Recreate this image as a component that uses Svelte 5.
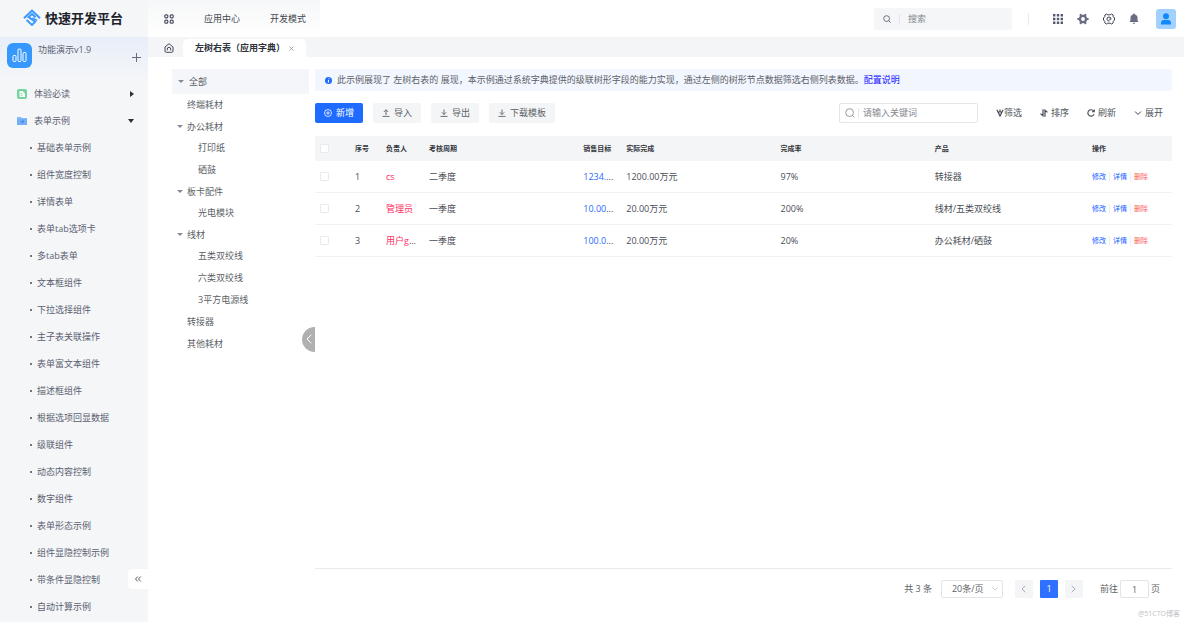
<script>
  const menu = [
    '基础表单示例', '组件宽度控制', '详情表单', '表单tab选项卡', '多tab表单', '文本框组件',
    '下拉选择组件', '主子表关联操作', '表单富文本组件', '描述框组件', '根据选项回显数据',
    '级联组件', '动态内容控制', '数字组件', '表单形态示例', '组件显隐控制示例',
    '带条件显隐控制', '自动计算示例',
  ];
  const tree = [
    { label: '终端耗材' },
    { label: '办公耗材', children: ['打印纸', '硒鼓'] },
    { label: '板卡配件', children: ['光电模块'] },
    { label: '线材', children: ['五类双绞线', '六类双绞线', '3平方电源线'] },
    { label: '转接器' },
    { label: '其他耗材' },
  ];
  const rows = [
    { owner: 'cs', period: '二季度', goal: '1234.', actual: '1200.00万元', rate: '97%', product: '转接器' },
    { owner: '管理员', period: '一季度', goal: '10.00', actual: '20.00万元', rate: '200%', product: '线材/五类双绞线' },
    { owner: '用户g', more: true, period: '一季度', goal: '100.0', actual: '20.00万元', rate: '20%', product: '办公耗材/硒鼓' },
  ];
  let keyword = $state('');
  let query = $state('');
  let page = $state('1');
</script>

<div class="app">
  <aside class="side">
    <div class="brand">
      <svg width="18" height="18" viewBox="0 0 18 18" fill="none" stroke="#3a97fb" stroke-width="2">
        <path d="M1 9.200 9 1.600l8 7.600" />
        <path d="M12.600 8.200 9 5 5.600 8.100l6.600 4.600L9 15.900l-5.400-5" />
        <path d="m9.400 9 4.800 2.400" stroke-width="1.400" />
      </svg>
      <strong>快速开发平台</strong>
    </div>
    <div class="product">
      <span class="product-icon">
        <svg width="15" height="15" viewBox="0 0 15 15" fill="none" stroke="#fff" stroke-width="1">
          <rect x="1" y="7.500" width="3" height="6" rx="1" />
          <rect x="6" y="1" width="3" height="12.500" rx="1" />
          <rect x="11" y="4.500" width="3" height="9" rx="1" />
        </svg>
      </span>
      <span class="product-name">功能演示v1.9</span>
      <button class="plain add" aria-label="添加">
        <svg width="9" height="9" viewBox="0 0 9 9" stroke="#686b78" stroke-width="1"><path d="M4.500 0v9M0 4.500h9" /></svg>
      </button>
    </div>
    <nav class="menu" aria-label="菜单">
      <button class="plain group">
        <svg width="10" height="10" viewBox="0 0 10 10"><rect width="10" height="10" rx="2" fill="#74d3a1" /><path d="M2.500 2h3L8 4.500V8H2.500z" fill="#fff" /><path d="M3.500 4.500h2M3.500 6.300h2" stroke="#74d3a1" stroke-width=".8" /></svg>
        <span>体验必读</span>
        <i class="caret right"></i>
      </button>
      <button class="plain group">
        <svg width="10" height="10" viewBox="0 0 10 10"><path d="M0 1h4l1 1h5v7H0z" fill="#86bcf9" /><path d="M0 3h10v6H0z" fill="#73aff6" /><path d="m6.500 4-3 1.700 3 1.600z" fill="#3c84e6" /></svg>
        <span>表单示例</span>
        <i class="caret down"></i>
      </button>
      <ul>
        {#each menu as item}
          <li><a href="#item">{item}</a></li>
        {/each}
      </ul>
    </nav>
    <button class="plain fold" aria-label="收起菜单">
      <svg width="8" height="8" viewBox="0 0 8 8" fill="none" stroke="#555a66" stroke-width="1"><path d="M3.800 1.500 1.500 4l2.300 2.500M6.800 1.500 4.500 4l2.300 2.500" /></svg>
    </button>
  </aside>

  <div class="work">
    <header>
      <nav class="top-nav" aria-label="主导航">
        <svg width="10" height="10" viewBox="0 0 10 10" fill="none" stroke="#4b4f60" stroke-width="1.200"><rect x=".8" y=".8" width="3" height="3" rx="1" /><rect x="6.200" y=".8" width="3" height="3" rx="1" /><rect x=".8" y="6.200" width="3" height="3" rx="1" /><rect x="6.200" y="6.200" width="3" height="3" rx="1" /></svg>
        <a href="#apps">应用中心</a>
        <a href="#dev">开发模式</a>
      </nav>
      <label class="global-search">
        <svg width="8" height="8" viewBox="0 0 8 8" fill="none" stroke="#6b6f7e"><circle cx="3.600" cy="3.600" r="2.900" /><path d="m5.800 5.800 1.800 1.800" /></svg>
        <input type="text" placeholder="搜索" aria-label="搜索" bind:value={query} />
      </label>
      <div class="tools">
        <button class="plain" aria-label="应用">
          <svg width="10" height="10" viewBox="0 0 10 10" fill="#555970"><path d="M0 0h2.400v2.400H0zM3.800 0h2.400v2.400H3.800zM7.600 0H10v2.400H7.600zM0 3.800h2.400v2.400H0zM3.800 3.800h2.400v2.400H3.800zM7.600 3.800H10v2.400H7.600zM0 7.600h2.400V10H0zM3.800 7.600h2.400V10H3.800zM7.600 7.600H10V10H7.600z" /></svg>
        </button>
        <button class="plain" aria-label="设置">
          <svg width="12" height="12" viewBox="0 0 12 12" fill="none" stroke="#6a6e84"><circle cx="6" cy="6" r="3.100" stroke-width="2.400" /><path d="M1.800 6h-.6M10.200 6h.6M3.900 2.400l-.3-.5M8.100 2.400l.3-.5M3.900 9.600l-.3.500M8.100 9.600l.3.500" stroke-width="2.200" stroke-linecap="round" /></svg>
        </button>
        <button class="plain" aria-label="主题">
          <svg width="12" height="12" viewBox="0 0 12 12" fill="none" stroke="#3d4053"><path stroke-linejoin="round" d="M3.400 1 4.800 1.800h2.400L8.600 1l1.500 1 .1 1.600L11.500 5v2l-1.300 1.400-.1 1.600-1.500 1-1.400-.8H4.800l-1.400.8-1.500-1-.1-1.600L.500 7V5l1.300-1.400L1.900 2z" /><path d="M6.200 6.200H8A2 2 0 1 0 6.600 7.900" /></svg>
        </button>
        <button class="plain" aria-label="通知">
          <svg width="10" height="12" viewBox="0 0 10 12" fill="#686d82"><path d="M5 .500a1 1 0 0 1 1 .9c1.600.4 2.500 1.600 2.500 3.300v2.600L9.600 9H.4l1.100-1.700V4.700C1.500 3 2.400 1.800 4 1.400A1 1 0 0 1 5 .500zM3.600 9.800h2.800L5 11.200z" /></svg>
        </button>
      </div>
      <button class="plain avatar" aria-label="用户">
        <svg width="12" height="12" viewBox="0 0 12 12" fill="#1188fb"><circle cx="6" cy="3.200" r="3" /><path d="M1 11.500V10q0-3 3-3h4q3 0 3 3v1.500z" /></svg>
      </button>
    </header>

    <div class="tabs">
      <button class="plain home" aria-label="首页">
        <svg width="10" height="10" viewBox="0 0 10 10" fill="none" stroke="#454958"><path d="M1 4 5 .700 9 4v4q0 1.300-1.300 1.300H2.300Q1 9.300 1 8z" /><path d="M3.300 7.400V6a1.700 1.700 0 0 1 3.400 0v1.400" /></svg>
      </button>
      <div class="tab">
        <strong>左树右表（应用字典）</strong>
        <button class="plain" aria-label="关闭">
          <svg width="5" height="5" viewBox="0 0 5 5" stroke="#8a8d98" stroke-width=".8"><path d="m.500.500 4 4M4.500.500l-4 4" /></svg>
        </button>
      </div>
    </div>

    <div class="body">
      <section class="tree">
        <div class="root"><i class="caret down small"></i>全部</div>
        <ul>
          {#each tree as node}
            <li>
              <div class="node" class:open={node.children}>
                {#if node.children}<i class="caret down small"></i>{/if}{node.label}
              </div>
              {#if node.children}
                <ul>
                  {#each node.children as child}
                    <li class="node leaf">{child}</li>
                  {/each}
                </ul>
              {/if}
            </li>
          {/each}
        </ul>
        <button class="plain handle" aria-label="收起左侧">
          <svg width="6" height="10" viewBox="0 0 6 10" fill="none" stroke="#fff" stroke-width="1"><path d="M5.300.800 1 5l4.300 4.200" /></svg>
        </button>
      </section>

      <main>
        <p class="tip">
          <svg width="7" height="7" viewBox="0 0 7 7"><circle cx="3.500" cy="3.500" r="3.500" fill="#1f6bff" /><path d="M3.900 1.300v.900M3.600 2.900 3.300 5.600" stroke="#fff" /></svg>
          <span>此示例展现了 左树右表的 展现，本示例通过系统字典提供的级联树形字段的能力实现，通过左侧的树形节点数据筛选右侧列表数据。<a href="#help">配置说明</a></span>
        </p>

        <div class="toolbar">
          <button class="btn primary">
            <svg width="8" height="8" viewBox="0 0 8 8" fill="none" stroke="#fff" stroke-width=".8"><circle cx="4" cy="4" r="3.500" /><path d="M4 2.200v3.600M2.200 4h3.600" /></svg>新增
          </button>
          <button class="btn">
            <svg width="8" height="8" viewBox="0 0 8 8" fill="none" stroke="#5c5f69" stroke-width=".9"><path d="M4 6V.800M1.800 3 4 .800 6.200 3M.500 7.400h7" /></svg>导入
          </button>
          <button class="btn">
            <svg width="8" height="8" viewBox="0 0 8 8" fill="none" stroke="#5c5f69" stroke-width=".9"><path d="M4 .500v5M1.800 3.300 4 5.500l2.200-2.200M.500 7.400h7" /></svg>导出
          </button>
          <button class="btn">
            <svg width="8" height="8" viewBox="0 0 8 8" fill="none" stroke="#5c5f69" stroke-width=".9"><path d="M4 .500v5M1.800 3.300 4 5.500l2.200-2.200M.500 7.400h7" /></svg>下载模板
          </button>
          <label class="search">
            <svg width="10" height="10" viewBox="0 0 10 10" fill="none" stroke="#8a8d96" stroke-width=".9"><circle cx="4.600" cy="4.600" r="3.900" /><path d="m7.400 7.400 2 2" /></svg>
            <input type="text" placeholder="请输入关键词" aria-label="关键词" bind:value={keyword} />
          </label>
          <div class="actions">
            <button class="plain">
              <svg width="8" height="8" viewBox="0 0 8 8" fill="none" stroke="#454852" stroke-width="1.200"><path d="M.900.700 4 7 7.100.700M2 3h4M4 .500V3" /></svg>筛选
            </button>
            <button class="plain gap">
              <svg width="8" height="8" viewBox="0 0 8 8" fill="none" stroke="#454852" stroke-width="1.200"><path d="M3 .300v6.500L.500 4.600M5 7.700V1.200l2.500 2.200" /></svg>排序
            </button>
            <button class="plain gap">
              <svg width="8" height="8" viewBox="0 0 8 8" fill="none" stroke="#454852" stroke-width="1.100"><path d="M7 5.200A3.200 3.200 0 1 1 6.600 2M7.200.500v2.200H5" /></svg>刷新
            </button>
            <button class="plain gap">
              <svg width="8" height="8" viewBox="0 0 8 8" fill="none" stroke="#454852" stroke-width="1"><path d="m1 2.500 3 3 3-3" /></svg>展开
            </button>
          </div>
        </div>

        <table>
          <colgroup>
            <col class="c-check" /><col class="c-no" /><col class="c-short" /><col class="c-wide" />
            <col class="c-short" /><col class="c-wide" /><col class="c-wide" /><col /><col class="c-ops" />
          </colgroup>
          <thead>
            <tr>
              <th><input type="checkbox" aria-label="全选" /></th>
              <th>序号</th><th>负责人</th><th>考核周期</th><th>销售目标</th><th>实际完成</th><th>完成率</th><th>产品</th><th>操作</th>
            </tr>
          </thead>
          <tbody>
            {#each rows as row, i}
              <tr>
                <td><input type="checkbox" aria-label={`选择 ${i + 1}`} /></td>
                <td>{i + 1}</td>
                <td><span class="owner">{row.owner}</span>{#if row.more}...{/if}</td>
                <td>{row.period}</td>
                <td><span class="goal">{row.goal}</span>...</td>
                <td>{row.actual}</td>
                <td>{row.rate}</td>
                <td>{row.product}</td>
                <td>
                  <div class="ops">
                    <a href="#edit">修改</a>
                    <a href="#detail">详情</a>
                    <a href="#delete" class="danger">删除</a>
                  </div>
                </td>
              </tr>
            {/each}
          </tbody>
        </table>

        <footer>
          <span class="total">共 3 条</span>
          <span class="size">
            <select aria-label="每页条数"><option>20条/页</option></select>
            <svg width="6" height="4" viewBox="0 0 6 4" fill="none" stroke="#c0c4cc" stroke-width=".9"><path d="m.500.500 2.500 2.600L5.500.500" /></svg>
          </span>
          <div class="pager">
            <button class="plain" aria-label="上一页"><svg width="5" height="8" viewBox="0 0 5 8" fill="none" stroke="#a9acb4"><path d="M4.300.800 1 4l3.300 3.200" /></svg></button>
            <button class="plain current">1</button>
            <button class="plain" aria-label="下一页"><svg width="5" height="8" viewBox="0 0 5 8" fill="none" stroke="#a9acb4"><path d="M.700.800 4 4 .700 7.200" /></svg></button>
          </div>
          <label class="jump">前往<input type="text" bind:value={page} />页</label>
        </footer>
        <small class="mark">@51CTO博客</small>
      </main>
    </div>
  </div>
</div>

<style>
  :global(body) { margin: 0; }
  .app {
    display: flex;
    height: 100vh;
    overflow: hidden;
    background: #fff;
    color: #5c5f66;
    font: 9px/14px "Open Sans", "Noto Sans CJK SC", sans-serif;
  }
  .app :is(button, input, select) { font: inherit; color: inherit; box-sizing: border-box; }
  .app svg { flex: none; display: block; }
  a { color: inherit; text-decoration: none; }
  ul { list-style: none; margin: 0; padding: 0; }
  .plain { border: 0; padding: 0; background: none; display: flex; align-items: center; justify-content: center; }

  .caret { border: 3px solid transparent; flex: none; }
  .caret.right { border-left: 4px solid #2c2f3a; border-right: 0; }
  .caret.down { border-top: 4px solid #2c2f3a; border-bottom: 0; }
  .caret.small { border-top: 3px solid #858a99; }

  .side { position: relative; flex: none; width: 148px; background: #f4f6f8; overflow: hidden; color: #5b5e70; }
  .brand { height: 37px; box-sizing: border-box; padding: 0 23px 2px; display: flex; align-items: center; gap: 4px; color: #20222a; font-size: 13px; line-height: 18px; }
  .product { height: 43px; box-sizing: border-box; padding: 6px 7px 0; display: flex; gap: 6px; background: linear-gradient(#e8eef8, #f4f6f8); }
  .product-icon { flex: none; width: 25px; height: 25px; border-radius: 6px; background: #3698fd; display: flex; align-items: center; justify-content: center; }
  .product-name { flex: 1; white-space: nowrap; }
  .add { height: 28px; }
  .group { width: 100%; height: 27px; padding: 0 14px 0 17px; gap: 7px; }
  .group span { flex: 1; text-align: left; }
  .menu li { height: 27px; display: flex; align-items: center; padding-left: 30px; gap: 5px; }
  .menu li::before { content: ""; width: 2px; height: 2px; border-radius: 50%; background: #474a5e; }
  .fold { position: absolute; right: 0; bottom: 33px; width: 20px; height: 20px; background: #fff; border-radius: 4px 0 0 4px; }

  .work { flex: 1; min-width: 0; display: flex; flex-direction: column; }
  header { flex: none; height: 37px; display: flex; align-items: center; padding-right: 8px; }
  .top-nav { height: 100%; display: flex; align-items: center; gap: 30px; padding: 0 14px 0 16px; background: linear-gradient(#f6f7f8, #fff); color: #43464f; }
  .global-search { margin-left: auto; width: 138px; height: 22px; box-sizing: border-box; padding: 0 9px; display: flex; align-items: center; gap: 8px; background: #f4f6f7; border-radius: 2px; }
  .app input[type="text"] { min-width: 0; border: 0; outline: 0; background: none; }
  .app .global-search input[type="text"] { flex: 1; height: 10px; padding: 0 0 0 8px; border-left: 1px solid #e2e5ea; }
  input::placeholder { color: #85888f; opacity: 1; }
  .tools { display: flex; align-items: center; gap: 14px; margin-left: 16px; padding-left: 25px; background: linear-gradient(#e8eaee, #e8eaee) left / 1px 14px no-repeat; }
  .avatar { width: 20px; height: 20px; margin-left: 17px; border-radius: 3px; background: #a2d0ff; }

  .tabs { flex: none; height: 20px; display: flex; background: #f3f5f7; }
  .home { width: 35px; padding: 2px 0 0 6px; }
  .tab { margin-top: 2px; padding: 0 12px; display: flex; align-items: center; gap: 4px; background: #fff; border-radius: 5px 5px 0 0; color: #2f323c; }

  .body { flex: 1; min-height: 0; display: flex; padding-left: 24px; }
  .tree { position: relative; flex: none; width: 143px; padding-top: 12px; box-sizing: border-box; }
  .root { height: 25px; margin-right: 6px; padding-left: 6px; display: flex; align-items: center; gap: 5px; background: #f4f6fa; }
  .node { height: 22px; display: flex; align-items: center; padding-left: 15px; }
  .node.open { height: 21px; padding-left: 5px; gap: 4px; }
  .node.leaf { padding-left: 26px; }
  .handle { position: absolute; right: 0; top: calc(50% - 13px); width: 13px; height: 25px; border-radius: 13px 0 0 13px; background: #b0b0b0; }

  main { flex: 1; min-width: 0; display: flex; flex-direction: column; padding: 12px 12px 0 0; }
  .tip { margin: 0 0 12px; height: 22px; flex: none; padding: 0 10px; display: flex; align-items: center; gap: 5px; background: #f2f6ff; border-radius: 2px; white-space: nowrap; }
  .tip a { color: #1414ff; }
  .toolbar { flex: none; display: flex; align-items: center; gap: 10px; margin-bottom: 13px; }
  .btn { height: 20px; padding: 0 9px; border: 0; border-radius: 2px; background: #f4f5f7; display: flex; align-items: center; gap: 4px; white-space: nowrap; }
  .app .btn.primary { background: #1f6bff; color: #fff; }
  .search { margin-left: auto; width: 139px; height: 20px; box-sizing: border-box; border: 1px solid #e3e5ea; border-radius: 2px; display: flex; align-items: center; gap: 3px; padding: 0 5px; }
  .app .search input[type="text"] { flex: 1; height: 10px; padding: 0 0 0 4px; border-left: 1px solid #e4e6ea; }
  .actions { display: flex; gap: 18px; padding: 0 9px 0 8px; color: #50535b; }
  .actions .gap { gap: 3px; }

  table { width: 100%; table-layout: fixed; border-collapse: collapse; }
  .c-check { width: 35px; }
  .c-no { width: 31px; }
  .c-short { width: 43px; }
  .c-wide { width: 18%; }
  .c-ops { width: 85px; }
  th, td { padding: 0 0 0 5px; text-align: left; white-space: nowrap; }
  th { height: 25px; background: #f4f5f7; color: #33353c; font-size: 7px; }
  td { height: 31px; border-bottom: 1px solid #f0f1f4; color: #4a4d55; }
  input[type="checkbox"] { appearance: none; display: block; margin: 0; width: 9px; height: 9px; border: 1px solid #e8eaee; border-radius: 1px; background: #fff; }
  .owner { color: #ff2d5f; }
  .goal { color: #1f6bff; }
  .ops { display: flex; font-size: 7px; color: #0f5cff; }
  .ops a + a { margin-left: 3px; padding-left: 3px; border-left: 1px solid #eceef2; }
  .ops a { line-height: 10px; }
  .ops .danger { color: #fa5a5a; }

  footer { flex: none; margin-top: auto; height: 41px; box-sizing: border-box; border-top: 1px solid #e8eaf0; padding-right: 12px; display: flex; align-items: center; justify-content: flex-end; }
  .size { position: relative; margin: 0 12px 0 9px; }
  select { appearance: none; display: block; width: 62px; height: 18px; padding: 0 10px; border: 1px solid #e2e4ea; border-radius: 2px; background: #fff; }
  .size svg { position: absolute; right: 5px; top: 7px; }
  .pager { display: flex; gap: 7px; margin-right: 17px; }
  .pager button { width: 18px; height: 18px; background: #f4f5f7; border-radius: 1px; }
  .app .pager .current { background: #2f70ff; color: #fff; }
  .jump { display: flex; align-items: center; gap: 2px; }
  .app .jump input[type="text"] { width: 29px; height: 18px; padding: 0; border: 1px solid #e2e4ea; border-radius: 2px; text-align: center; }
  .mark { align-self: flex-end; margin-right: -8px; height: 13px; font-size: 7px; line-height: 10px; color: #bfc1c5; }
</style>
